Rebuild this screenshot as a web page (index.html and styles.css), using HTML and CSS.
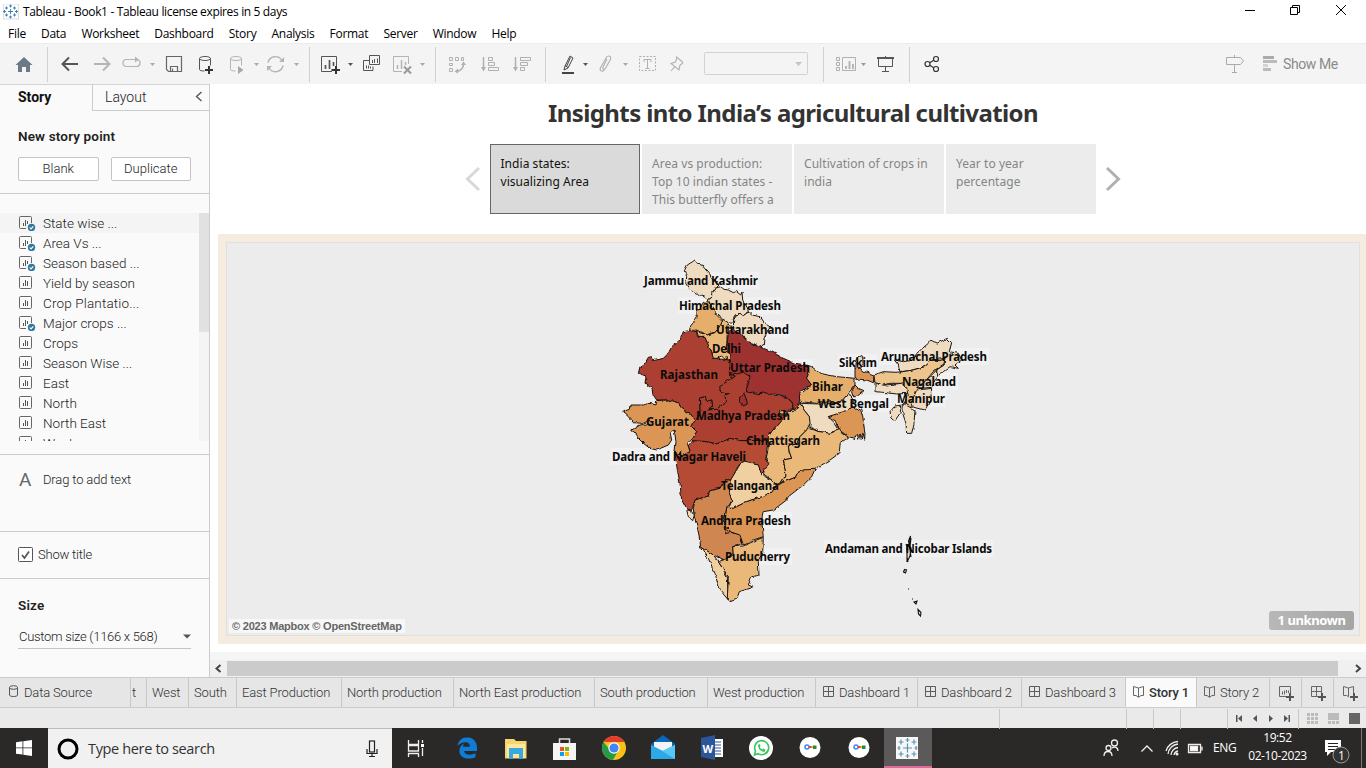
FILE: index.html
```html
<!DOCTYPE html>
<html lang="en">
<head>
<meta charset="utf-8">
<title>Tableau - Book1</title>
<link rel="stylesheet" href="styles.css">
</head>
<body>
<svg class="defs" width="0" height="0">
  <symbol id="sheet" viewBox="0 0 18 16">
    <rect x="1.500" y="1.500" width="12" height="12" rx="1" fill="none" stroke="#666"/>
    <path d="M5.500 8v3M7.500 5v6M9.500 6v5" stroke="#555" fill="none"/>
  </symbol>
  <symbol id="used" viewBox="0 0 18 16">
    <path d="M13.500 8V2.500a1 1 0 0 0-1-1h-10a1 1 0 0 0-1 1v10a1 1 0 0 0 1 1H8" fill="none" stroke="#666"/>
    <path d="M5.500 8v3M7.500 5v6M9.500 6v3" stroke="#555" fill="none"/>
    <circle cx="13.500" cy="12.500" r="3.700" fill="#34799b"/>
    <path d="M11.700 12.500l1.300 1.400 2.300-2.600" fill="none" stroke="#fff" stroke-width="1.100"/>
  </symbol>
  <symbol id="dash" viewBox="0 0 12 12"><path d="M.5.5h10v10H.5zM5.500.5v10M.5 5.500h10" fill="none" stroke="#5c5c5c"/></symbol>
  <symbol id="book" viewBox="0 0 12 12"><path d="M.5.5L5.500 2l5-1.500v9H8L5.500 11.300 3 9.500H.5zM5.500 2v9" fill="none" stroke="#666"/></symbol>
</svg>

<header class="titlebar">
  <svg class="app-logo" width="16" height="16" viewBox="0 0 16 16"><rect width="15" height="15" x=".5" fill="#fff" stroke="#ddd"/><path d="M7.500 5v5M5 7.500h5M3.500 2.500v3M2 4h3M11.500 2.500v3M10 4h3M3.500 9.500v3M2 11h3M11.500 9.500v3M10 11h3M7.500.5v3M6 2h3M7.500 11.500v3M6 13h3M1.500 6v3M0 7.500h3M13.500 6v3M12 7.500h3" stroke="#3b86b4"/></svg>
  <span class="title-text">Tableau - Book1 - Tableau license expires in 5 days</span>
  <svg class="win-controls" width="126" height="22" viewBox="1240 0 126 22" fill="none" stroke="#000"><path d="M1245 10.500h10M1290.500 7.500h7v7h-7zM1292.500 7.500v-2h7v7h-2M1336 5l10 10M1346 5l-10 10"/></svg>
</header>
<nav class="menu">
  <span>File</span><span>Data</span><span>Worksheet</span><span>Dashboard</span><span>Story</span><span>Analysis</span><span>Format</span><span>Server</span><span>Window</span><span>Help</span>
</nav>

<div class="toolbar">
  <svg width="47" height="41" viewBox="0 43 47 41"><path d="M15.500 65L24 57l8.500 8H30v7h-4v-5h-4v5h-4v-7z" fill="#6b7886"/></svg>
  <i class="sep"></i>
  <svg width="261" height="41" viewBox="48 43 261 41" fill="none" stroke="#b4b4b4">
    <path d="M78 64H63M69 57.500L62.500 64l6.500 6.500" stroke="#555" stroke-width="2"/>
    <path d="M94 64h15M103 57.500l6.500 6.500-6.500 6.500" stroke-width="2"/>
    <path d="M133 59.500h-6.500a3.500 3.500 0 0 0 0 7h10a3.500 3.500 0 0 0 2-6.400M130 59.500h6" stroke-width="1.200"/><path d="M135 56.500l4 3-4 3z" fill="#b4b4b4" stroke="none"/>
    <path d="M166.500 56.500h15v15h-13l-2-2zM170.500 71v-4.500h7V71M172.500 68.500v2.500" stroke="#666" stroke-width="1.200"/>
    <path d="M199.500 58.500v11c0 1 2 1.500 5 1.500M210.500 58.500v7" stroke="#555"/><ellipse cx="205" cy="58.500" rx="5.500" ry="2" stroke="#555"/><path d="M205 70h8M209 66v8" stroke="#333" stroke-width="2"/>
    <path d="M230.500 58.500v11c0 1 2 1.500 5 1.500M241.500 58.500v7"/><ellipse cx="236" cy="58.500" rx="5.500" ry="2"/><path d="M238 66l5.500 4-5.500 4z" fill="#a8a8a8" stroke="none"/>
    <path d="M268 62.500a7.600 7.600 0 0 1 14-2M283 65.500a7.600 7.600 0 0 1-14 2.500" stroke-width="1.400"/><path d="M279 62h5v-5zM272 66h-5v5z" fill="#b4b4b4" stroke="none"/>
    <path d="M150 63h5l-2.500 3zM254 63h5l-2.500 3zM294 63h5l-2.500 3z" fill="#aaa" stroke="none"/>
  </svg>
  <i class="sep"></i>
  <svg width="125" height="41" viewBox="310 43 125 41" fill="none" stroke="#555">
    <path d="M332 71.500h-10.500v-15h15V66"/><path d="M325.500 69v-4M329.500 69v-9M333.500 66v-4" stroke-width="1.700"/><path d="M331.500 70h8.500M336 66v8" stroke="#333" stroke-width="2"/>
    <path d="M348 63h5l-2.500 3z" fill="#555" stroke="none"/>
    <path d="M369.500 55.500h10v9h-10zM369 60.500h-5.500v10h9.500v-4M372.500 63v-3M374.500 63v-4M377.500 63v-4.500M366.500 68.500v-3M368.500 68.500v-3M370.500 68.500v-2"/>
    <g stroke="#b4b4b4"><path d="M402 71.500h-8.500v-15h15V64"/><path d="M397.500 69v-4M401.500 69v-9M405.500 65v-3" stroke-width="1.500"/><path d="M404 66.500l7 7M411 66.500l-7 7" stroke="#999" stroke-width="2"/><path d="M420 63h5l-2.500 3z" fill="#aaa" stroke="none"/></g>
  </svg>
  <i class="sep"></i>
  <svg width="109" height="41" viewBox="436 43 109 41" fill="none" stroke="#b0b0b0">
    <path d="M449.500 57.500h3v3h-3zM455.500 57.500h3v3h-3zM461.500 57.500h2v3h-2zM449.500 63.500h3v2h-3zM449.500 68.500h3v3h-3z"/><path d="M463.500 64c0 4-2 6.500-7 7.500" stroke-width="1.500"/><path d="M461 65h5l-2.500-3.500zM458 68.500v5l-3.500-2z" fill="#b0b0b0" stroke="none"/>
    <path d="M483.500 57v12M515.500 57v12" stroke-width="1.500"/><path d="M481 67h5l-2.500 4.500zM513 67h5l-2.500 4.500z" fill="#b0b0b0" stroke="none"/>
    <path d="M488.500 57.500h4v3h-4zM488.500 62.500h6v3h-6zM488.500 67.500h10v3h-10zM520.500 57.500h10v3h-10zM520.500 62.500h7v3h-7zM520.500 67.500h4v3h-4z"/>
  </svg>
  <i class="sep"></i>
  <svg width="277" height="41" viewBox="546 43 277 41" fill="none" stroke="#b0b0b0">
    <path d="M570 56l3 2-5 10-4 2 1-4zM565 65.500l3 2M570.500 57.500l-4 9" stroke="#444"/><path d="M562 73h12" stroke="#444" stroke-width="2"/><path d="M583 63h5l-2.500 3z" fill="#555" stroke="none"/>
    <path d="M607 59l-4 8c-1 2 1.500 3 2.500 1.200l5-9c1.300-2.500-2.500-4.500-4-2l-6 10.500c-1.500 3 2 4.500 3.500 2.500l4-6" stroke-width="1.100"/><path d="M623 63h5l-2.500 3z" fill="#aaa" stroke="none"/>
    <path d="M639.500 56.500h16v14h-16z" stroke-dasharray="2 1.500"/><path d="M644 62v-2.500h7V62M647.500 59.500V68M645.500 68.500h4"/>
    <path d="M676 56.500l7 6M677 57.500l-1.500 4.500-4.500 1.500 8 6.500 1-5 3-2M674.500 67l-3.500 4" stroke-width="1.100"/>
    <rect x="704.500" y="52.500" width="103" height="22" rx="1" fill="#f4f4f4" stroke="#d2d2d2"/><path d="M795 62h7l-3.500 4z" fill="#c4c4c4" stroke="none"/>
  </svg>
  <i class="sep"></i>
  <svg width="85" height="41" viewBox="824 43 85 41" fill="none" stroke="#b0b0b0">
    <path d="M836.500 57.500h3v3h-3zM836.500 62.500h3v3h-3zM836.500 67.500h3v3h-3zM842.500 57.500h13v13h-13z"/><path d="M846 69v-3M849.500 69v-8M853 69v-5" stroke-width="1.800"/><path d="M861 63h5l-2.500 3z" fill="#999" stroke="none"/>
    <path d="M878.500 58h14v8.500h-14zM885.500 56v2M885.500 67v4M882 71.500h7" stroke="#555"/><path d="M877 58h17" stroke="#555" stroke-width="2"/>
  </svg>
  <i class="sep"></i>
  <svg width="40" height="41" viewBox="910 43 40 41" fill="none" stroke="#333" stroke-width="1.200"><circle cx="927.500" cy="64" r="2.500"/><circle cx="936" cy="59" r="2.500"/><circle cx="936" cy="69" r="2.500"/><path d="M929.700 62.700l4-2.400M929.700 65.300l4 2.400"/></svg>
  <svg class="showme-icons" width="60" height="41" viewBox="1222 43 60 41" fill="none" stroke="#aaa"><path d="M1226.500 57.500h14l3 3.500-3 3.500h-14zM1234.500 55v2.500M1234.500 65v7M1232 72.500h5"/><path d="M1263 57.500h11" stroke-width="3"/><path d="M1263 61.500h14M1263 69.500h8" stroke="#bbb" stroke-width="3"/><path d="M1263 65.500h5" stroke="#d4d4d4" stroke-width="3"/></svg>
  <span class="showme">Show Me</span>
</div>

<div class="work">
  <aside class="side">
    <div class="tabs2"><b>Story</b><span>Layout<svg width="8" height="11" viewBox="0 0 8 11"><path d="M6.500 1L1.500 5.500l5 4.500" fill="none" stroke="#555" stroke-width="1.400"/></svg></span></div>
    <section class="newpoint">
      <h3>New story point</h3>
      <div class="btns"><button>Blank</button><button>Duplicate</button></div>
    </section>
    <section class="listbox">
      <ul>
        <li class="hover"><svg><use href="#used"/></svg>State wise ...</li>
        <li><svg><use href="#used"/></svg>Area Vs ...</li>
        <li><svg><use href="#used"/></svg>Season based ...</li>
        <li><svg><use href="#sheet"/></svg>Yield by season</li>
        <li><svg><use href="#sheet"/></svg><span class="wide">Crop Plantatio...</span></li>
        <li><svg><use href="#used"/></svg>Major crops ...</li>
        <li><svg><use href="#sheet"/></svg>Crops</li>
        <li><svg><use href="#sheet"/></svg>Season Wise ...</li>
        <li><svg><use href="#sheet"/></svg>East</li>
        <li><svg><use href="#sheet"/></svg>North</li>
        <li><svg><use href="#sheet"/></svg>North East</li>
        <li><svg><use href="#sheet"/></svg>West</li>
      </ul>
      <div class="track"><div class="thumb"></div></div>
    </section>
    <section class="dragtext"><span class="bigA">A</span>Drag to add text</section>
    <section class="showtitle"><svg width="15" height="15" viewBox="0 0 15 15"><rect x=".5" y=".5" width="14" height="14" rx="1" fill="#fff" stroke="#555"/><path d="M4 8l2.500 3L11 4.500" fill="none" stroke="#555" stroke-width="1.700"/></svg>Show title</section>
    <section class="size"><h3>Size</h3><div class="select">Custom size (1166 x 568)<svg width="8" height="5" viewBox="0 0 8 5"><path d="M0 .5h8L4 4.500z" fill="#555"/></svg></div></section>
  </aside>

  <main class="stage">
    <h1>Insights into India’s agricultural cultivation</h1>
    <div class="points">
      <svg width="16" height="26" viewBox="0 0 16 26"><path d="M14 2L2.500 13 14 24" fill="none" stroke="#d8d8d8" stroke-width="3"/></svg>
      <div class="point on">India states:<br>visualizing Area</div>
      <div class="point">Area vs production:<br>Top 10 indian states -<br>This butterfly offers a</div>
      <div class="point">Cultivation of crops in<br>india</div>
      <div class="point">Year to year<br>percentage</div>
      <svg width="16" height="26" viewBox="0 0 16 26"><path d="M2 2l11.500 11L2 24" fill="none" stroke="#b0b0b0" stroke-width="3"/></svg>
    </div>
    <div class="frame">
      <svg class="map" width="1134" height="394" viewBox="226 242 1134 394">
        <defs><filter id="coast" x="-5%" y="-5%" width="110%" height="110%" color-interpolation-filters="sRGB"><feTurbulence type="fractalNoise" baseFrequency=".18" numOctaves="2" seed="4"/><feDisplacementMap in="SourceGraphic" scale="3.500" xChannelSelector="R" yChannelSelector="G"/></filter></defs>
        <g fill="#f1f1f1">
          <rect x="643" y="272" width="116" height="17"/><rect x="678" y="297" width="104" height="17"/><rect x="715" y="321" width="75" height="17"/><rect x="729" y="359" width="84" height="17"/><rect x="838" y="354" width="40" height="17"/><rect x="880" y="348" width="109" height="17"/><rect x="901" y="373" width="57" height="17"/><rect x="896" y="390" width="50" height="17"/><rect x="818" y="395" width="73" height="17"/><rect x="611" y="448" width="136" height="17"/><rect x="700" y="512" width="92" height="17"/><rect x="724" y="548" width="68" height="17"/><rect x="824" y="540" width="170" height="17"/>
        </g>
        <g filter="url(#coast)"><g class="states" transform="translate(600 250) scale(.33333)">
          <path fill="#ab4032" d="M268 242L250 245 240 270 215 290 205 310 190 325 160 332 155 320 145 322 135 340 120 350 115 370 138 378 135 400 155 415 160 435 170 450 205 450 240 460 245 475 270 490 285 510 300 495 300 470 298 445 315 440 320 455 335 450 338 470 325 480 350 478 378 455 375 435 388 430 405 375 390 360 390 330 340 325 335 305 315 262 292 262 290 245z"/>
          <path fill="#9e3231" d="M385 245L400 235 420 250 445 275 478 290 515 305 550 325 585 340 620 345 628 365 620 385 635 405 600 425 600 450 595 470 580 480 575 455 560 440 525 432 495 436 470 430 438 425 405 400 388 368 390 340 380 300z"/>
          <path fill="#ab4032" d="M388 368L410 372 430 367 450 380 445 400 438 425 470 433 495 428 525 436 560 442 578 460 578 480 545 482 560 495 540 515 515 545 508 570 460 572 420 572 390 565 350 582 320 575 285 575 275 570 290 545 275 530 285 510 300 500 300 470 298 445 315 440 320 455 335 450 338 470 325 480 350 478 378 455 375 435 388 430 360 423 360 408 405 380z"/>
          <path fill="#9e3231" d="M432 430L440 450 442 462 430 468 418 455 420 440z"/>
          <path fill="#b54b35" d="M225 610L232 660 240 700 245 750 260 778 275 780 285 750 325 738 330 722 360 715 375 690 395 690 410 655 425 635 450 640 475 645 480 675 495 660 510 645 498 630 500 600 505 570 460 572 420 572 390 565 350 582 320 575 285 572 275 575 262 590 270 605 250 615z"/>
          <path fill="#db9655" d="M168 465L150 460 130 465 90 465 88 478 68 485 85 500 100 518 130 520 150 510 140 522 120 525 95 540 115 565 130 580 150 595 170 600 205 585 215 570 210 545 222 540 228 575 225 600 232 620 250 615 270 605 262 580 275 565 290 545 275 530 285 510 270 490 245 475 240 460 205 450 170 452z"/>
          <path fill="#efdbc0" d="M253 62L262 45 278 35 285 30 292 40 305 42 312 53 325 68 335 85 350 95 357 105 345 118 335 128 338 140 325 150 312 140 298 138 290 130 270 118 262 108 257 100 260 80z"/>
          <path fill="#efdbc0" d="M338 128L345 115 362 110 372 118 385 120 400 128 410 125 422 135 426 126 428 150 438 165 445 185 430 195 420 190 405 195 400 205 402 220 385 218 370 210 358 198 345 188 330 160 325 150 338 140z"/>
          <path fill="#e5ae6a" d="M325 155L338 175 345 190 355 200 368 213 362 225 345 248 330 250 322 255 305 248 290 240 268 242 272 228 285 210 292 200 290 180 300 178 310 160z"/>
          <path fill="#eab878" d="M290 245L305 250 322 255 345 248 362 225 370 208 380 215 388 232 382 250 380 280 378 300 392 310 388 330 375 328 365 318 350 325 340 325 335 305 325 285 315 262 295 262z"/>
          <path fill="#efdbc0" d="M402 205L408 195 420 190 430 197 445 186 455 195 480 200 490 215 515 232 500 248 492 265 490 285 478 290 460 280 445 275 430 262 420 250 402 245 400 220z"/>
          <path fill="#e5ae6a" d="M620 345L635 350 660 370 710 380 765 385 765 405 745 430 720 460 690 455 650 460 600 455 598 435 635 405 620 385 628 365z"/>
          <path fill="#efdbc0" d="M600 460L660 462 720 460 745 430 760 450 752 470 730 490 685 500 705 520 718 540 690 550 660 545 630 532 628 500 612 480z"/>
          <path fill="#eab878" d="M600 460L612 480 628 500 630 520 620 540 600 560 590 582 565 588 568 605 575 625 550 630 555 655 558 675 545 695 530 705 515 690 490 672 495 655 510 645 498 630 505 590 505 560 515 545 540 515 560 495 537 495 540 482 580 485z"/>
          <path fill="#eab878" d="M628 535L660 545 690 550 715 540 745 562 720 580 718 610 690 630 665 645 645 658 620 665 600 660 590 680 555 695 540 705 558 675 555 655 550 630 575 625 568 605 565 588 590 582 600 560 620 540z"/>
          <path fill="#db9655" d="M685 500L730 485 755 470 782 480 788 500 795 550 794 568 789 550 784 568 780 552 776 568 772 553 765 565 745 560 718 540 710 515z"/>
          <path fill="#db9655" d="M765 405L775 415 792 422 770 440 758 440 755 425z"/>
          <path fill="#db9655" d="M765 355L780 355 795 365 822 375 820 398 800 390 780 388 765 382z"/>
          <path fill="#efdbc0" d="M765 340L770 325 780 318 788 322 790 350 765 355z"/>
          <path fill="#efdbc0" d="M900 365L895 345 883 330 910 335 940 330 950 310 985 280 992 270 1010 280 1042 265 1055 278 1048 305 1075 310 1085 330 1065 345 1075 355 1050 350 1030 365 1010 380 1010 360 1032 345 1035 325 995 330 975 350 930 362z"/>
          <path fill="#edc48b" d="M822 375L850 365 890 367 930 362 975 350 995 330 1020 332 1035 325 1032 345 1000 365 975 395 945 425 940 460 930 475 910 465 925 435 915 412 905 400 870 400 850 405 825 398z"/>
          <path fill="#efdbc0" d="M1010 360L1010 380 995 412 965 415 950 412 975 395z"/>
          <path fill="#efdbc0" d="M950 420L995 415 992 450 975 480 945 472 932 462z"/>
          <path fill="#efdbc0" d="M825 400L850 406 905 400 920 412 923 430 890 432 860 428 825 425z"/>
          <path fill="#efdbc0" d="M870 485L885 468 905 465 900 490 885 512 872 500z"/>
          <path fill="#efdbc0" d="M910 460L935 475 945 480 942 520 935 550 920 550 918 520 908 490z"/>
          <path fill="#cf8650" d="M285 750L325 738 330 722 360 715 375 690 392 690 388 725 395 750 380 775 372 815 375 840 415 855 432 880 398 890 400 910 370 930 340 915 302 890 295 845 283 800 280 775z"/>
          <path fill="#f0cfa0" d="M410 660L425 635 450 640 475 645 485 675 515 690 530 705 510 730 490 738 470 745 440 755 400 775 385 775 395 750 388 725 392 690z"/>
          <path fill="#db9655" d="M380 775L400 775 440 755 490 738 510 730 530 705 555 695 590 680 600 660 645 658 635 680 610 705 565 740 560 750 520 780 490 785 485 810 490 860 460 870 430 885 420 855 390 845 375 835 370 815 378 790z"/>
          <path fill="#efdbc0" d="M260 780L275 782 283 795 278 812 265 800z"/>
          <path fill="#f0cfa0" d="M302 890L340 915 355 935 370 960 382 980 385 1050 360 1020 345 970 325 925z"/>
          <path fill="#eab878" d="M398 890L430 888 470 870 490 862 488 910 475 935 477 975 455 980 445 1005 460 1012 418 1025 410 1048 390 1055 382 1045 385 980 355 935 370 930 400 915z"/>
          <path fill="#cf8650" d="M372 835L388 832 390 848 378 850zM377 838l8 6M230 618l14-12M355 318l4 12M378 320l2 10M388 325l4 15"/>
        </g></g>
        <g class="isles"><path d="M910.500 536l-2 5 1 4zM911 538l-1 9M907 551c-1-3 1-6 2-7l2 4-1 8-3 6zM909 543l2 14M906 544l2 6M907 557l1 5M904.500 569.500l2 .5-1 3-2-1zM908 589h1M912 599h1M914 602l3-1-1 3zM918 609.500l3 3-.5 3.500-2-2z"/></g>
        <g class="labels">
          <text x="644" y="285" textLength="114">Jammu and Kashmir</text><text x="679" y="310" textLength="102">Himachal Pradesh</text><text x="716" y="334" textLength="73">Uttarakhand</text><text x="712" y="353" textLength="29">Delhi</text><text x="730" y="372" textLength="80">Uttar Pradesh</text><text x="660" y="379" textLength="58">Rajasthan</text><text x="839" y="367" textLength="38">Sikkim</text><text x="881" y="361" textLength="106">Arunachal Pradesh</text><text x="902" y="386" textLength="54">Nagaland</text><text x="897" y="403" textLength="48">Manipur</text><text x="812" y="391" textLength="31">Bihar</text><text x="818" y="408" textLength="71">West Bengal</text><text x="646" y="426" textLength="43">Gujarat</text><text x="696" y="420" textLength="94">Madhya Pradesh</text><text x="746" y="445" textLength="74">Chhattisgarh</text><text x="612" y="461" textLength="134">Dadra and Nagar Haveli</text><text x="721" y="490" textLength="58">Telangana</text><text x="701" y="525" textLength="90">Andhra Pradesh</text><text x="725" y="561" textLength="65">Puducherry</text><text x="825" y="553" textLength="167">Andaman and Nicobar Islands</text>
        </g>
      </svg>
      <span class="credit">© 2023 Mapbox © OpenStreetMap</span>
      <span class="unknown">1 unknown</span>
    </div>
    <div class="under"></div>
    <div class="hscroll">
      <svg width="17" height="17" viewBox="0 0 17 17"><path d="M10.500 5l-4 3.500 4 3.500" fill="none" stroke="#444" stroke-width="2"/></svg>
      <div class="hthumb"></div>
      <svg width="28" height="17" viewBox="0 0 28 17"><path d="M18 5l4 3.500-4 3.500" fill="none" stroke="#444" stroke-width="2"/></svg>
    </div>
  </main>
</div>

<div class="sheets">
  <div class="source"><svg width="10" height="13" viewBox="0 0 10 13" fill="none" stroke="#555"><ellipse cx="4.500" cy="2.500" rx="4" ry="1.800"/><path d="M.5 2.500v7.500c0 2 8 2 8 0V2.500"/></svg>Data Source</div>
  <div class="cut">t</div><div>West</div><div>South</div><div>East Production</div><div>North production</div><div>North East production</div><div>South production</div><div>West production</div>
  <div class="ico"><svg><use href="#dash"/></svg>Dashboard 1</div><div class="ico"><svg><use href="#dash"/></svg>Dashboard 2</div><div class="ico"><svg><use href="#dash"/></svg>Dashboard 3</div>
  <div class="ico active"><svg><use href="#book"/></svg>Story 1</div><div class="ico"><svg><use href="#book"/></svg>Story 2</div>
  <div class="add"><svg viewBox="0 0 16 16" fill="none" stroke="#666"><path d="M8 11.500H1.500v-10h11V8M4.500 9.500v-3M6.500 9.500v-4M8.500 8v-3M10.500 8V5.500"/><path d="M8 12h8M12 8v8" stroke="#555" stroke-width="2"/></svg></div>
  <div class="add"><svg viewBox="0 0 16 16" fill="none" stroke="#666"><path d="M8 11.500H1.500v-10h10V8M6.500 1.500v10M1.500 6.500h10"/><path d="M8 12h8M12 8v8" stroke="#555" stroke-width="2"/></svg></div>
  <div class="add"><svg viewBox="0 0 16 16" fill="none" stroke="#666"><path d="M7 12L4.500 10.500h-3v-9l5 1.500 5-1.500V8M6.500 3v8"/><path d="M8 12h8M12 8v8" stroke="#555" stroke-width="2"/></svg></div>
</div>
<div class="status">
  <svg width="367" height="21" viewBox="999 707 367 21"><path d="M999.500 708v20M1126.500 708v20M1153.500 708v20M1180.500 708v20M1227.500 708v20M1298.500 708v20" stroke="#c8c8c8"/><path d="M1236 714h1.500v7H1236zM1242 714v7l-4-3.500zM1257 714v7l-4-3.500zM1269 714v7l4-3.500zM1284 714v7l4-3.500zM1288.500 714h1.500v7h-1.500z" fill="#555"/><path d="M1307 712h3v3h-3zm4 0h3v3h-3zm4 0h3v3h-3zm-8 4h3v3h-3zm4 0h3v3h-3zm4 0h3v3h-3zm-8 4h3v3h-3zm4 0h3v3h-3zm4 0h3v3h-3zM1328 712h11v7h-11zM1328 720h3v3h-3zm4 0h3v3h-3zm4 0h3v3h-3z" fill="#bbb"/><path d="M1349 712h11v11h-11z" fill="#666"/></svg>
</div>

<footer class="taskbar">
  <div class="start"><svg width="16" height="16" viewBox="0 0 16 16" fill="#fff"><path d="M0 2.200L6.500 1.300v6.200H0zM7.300 1.200L16 0v7.500H7.300zM0 8.300h6.500v6.300L0 13.700zM7.300 8.300H16V16l-8.700-1.200z"/></svg></div>
  <div class="search"><svg width="22" height="22" viewBox="0 0 22 22"><circle cx="11" cy="11" r="9" fill="none" stroke="#000" stroke-width="3"/></svg><span>Type here to search</span><svg width="12" height="18" viewBox="0 0 12 18" fill="none" stroke="#222" stroke-width="1.200"><rect x="3.500" y="1" width="5" height="11"/><path d="M1 9v4.500h10V9M6 14v3M3 16.500h6"/></svg></div>
  <svg class="apps" width="548" height="40" viewBox="392 728 548 40">
    <path d="M408.500 740v4.500h10V740M408.500 745.500v5.500h10v-5.500zM408.500 757v-3.500h10v3.500M422.500 740v3M422.500 748v8" fill="none" stroke="#eee" stroke-width="1.300"/><path d="M421 744h3v3h-3z" fill="#fff"/>
    <path d="M457.500 746c1-6 5-9 10.500-8.500 6 .5 9 5 9 11v2.500h-13c.3 4 6.500 4.800 11.500 2.300v4c-9 3.500-17.500-.3-16-8 .5-3 3-5 5-6-1 1-1.500 2.200-1.500 3.500h7c0-7-9.500-5-12.500-.8z" fill="#0e7dd8"/>
    <path d="M505 739h9l2 2h10.500v17.500H505z" fill="#f6d56f"/><path d="M507 744h18v14h-18z" fill="#ffe69a"/><path d="M509 748h14v11h-4v-5h-6v5h-4z" fill="#36a9df"/>
    <path d="M559.500 744v-5h10v5" fill="none" stroke="#ddd" stroke-width="1.500"/><path d="M553 743h23v17h-23z" fill="#f4f4f4"/><path d="M560 747h4v4h-4z" fill="#f25022"/><path d="M565 747h4v4h-4z" fill="#7fba00"/><path d="M560 752h4v4h-4z" fill="#00a4ef"/><path d="M565 752h4v4h-4z" fill="#ffb900"/>
    <circle cx="614" cy="748" r="12" fill="#fbc116"/><path d="M603.600 742a12 12 0 0 0 9.400 18l5-9-8-1z" fill="#259b48"/><path d="M603.600 742a12 12 0 0 1 20.800 0H614z" fill="#e33b2e"/><circle cx="614" cy="748" r="5.700" fill="#fff"/><circle cx="614" cy="748" r="4.600" fill="#4285f4"/>
    <path d="M651 744l12-9 12 9v15h-24z" fill="#0b67b8"/><path d="M654 742h18v9h-18z" fill="#f4f4f4"/><path d="M651 745l12 6 12-6v14h-24z" fill="#2ea9e8"/><path d="M675 745v14l-13-8z" fill="#55c8f5"/>
    <path d="M712 739h11v18h-11z" fill="#fff"/><path d="M713 742h8M713 745h8M713 748h8M713 751h8M713 754h8" stroke="#2b579a"/><path d="M701 738l14-3v25l-14-3z" fill="#2b579a"/><text x="702.500" y="752.500" class="w">W</text>
    <circle cx="761" cy="748" r="12" fill="#fff"/><path d="M754.500 755l1-4a7 7 0 1 1 2.600 2.700z" fill="none" stroke="#35c85a" stroke-width="1.600"/><path d="M758 745c0 4 3 6.500 6.500 7l1-2.300-2.200-1.200-1 1c-1.200-.5-2-1.400-2.500-2.500l.8-1-1-2z" fill="#35c85a"/>
    <g id="gl"><circle cx="810" cy="747.500" r="10.500" fill="#fff"/><circle cx="807" cy="747" r="2" fill="none" stroke="#4285f4" stroke-width="1.500"/><path d="M809 747h3" stroke="#ea4335" stroke-width="2"/><path d="M811.500 747h2" stroke="#fbbc05" stroke-width="2"/><path d="M813 745.500h3.500v3.500H813z" fill="#1e8e3e"/></g>
    <use href="#gl" x="49"/>
    <path d="M884 728h48v40h-48z" fill="#5b5959"/><path d="M884 766h48v2h-48z" fill="#e0689a"/><path d="M896 737h22v22h-22z" fill="#f7f7f7"/>
    <path transform="translate(-.500 0)" d="M908 743.500v9M903.500 748h9M901.500 739.500v5M899 742h5M914.500 739.500v5M912 742h5M901.500 751.500v5M899 754h5M914.500 751.500v5M912 754h5M908 738v4M906 740h4M908 754v4M906 756h4M899.500 746v4M898 748h3M916.500 746v4M915 748h3" stroke="#5f93b4" stroke-width="1.200"/>
  </svg>
  <svg class="tray" width="110" height="40" viewBox="1100 728 110 40" fill="none" stroke="#eee" stroke-width="1.300"><circle cx="1108.500" cy="748" r="2.500"/><circle cx="1114.500" cy="743" r="3"/><path d="M1104 756c0-6 8-6 8 0M1112 748c3-2 6-.5 6 3"/><path d="M1141.500 751.500l5.500-5.500 5.500 5.500"/><path d="M1168 754a11 11 0 0 1 10-10M1171 755a8 8 0 0 1 7-7.500M1174 755a5 5 0 0 1 4-4M1166 751a14 14 0 0 1 12-9.500"/><circle cx="1177" cy="754" r="1.500" fill="#eee" stroke="none"/><path d="M1188.500 744.500h12v8h-12zM1202 746.500v4"/><path d="M1190.500 746.500h7v4h-7z" fill="#fff"/></svg>
  <span class="lang">ENG</span>
  <span class="clock">19:52<br>02-10-2023</span>
  <svg class="notice" width="46" height="40" viewBox="1320 728 46 40"><path d="M1325 740h16v12h-10l-4 4v-4h-2z" fill="#fff"/><path d="M1328 743.500h10M1328 746.500h10M1328 749.500h7" stroke="#222"/><circle cx="1341" cy="755" r="8" fill="#333" stroke="#999"/><text x="1338" y="759.500" class="n">1</text><path d="M1361.500 728v40" stroke="#777"/></svg>
</footer>
</body>
</html>
```
FILE: styles.css
```css
* { box-sizing: border-box; }
body { margin: 0; width: 1366px; height: 768px; overflow: hidden; background: #fff; font-family: "Open Sans", "Noto Sans", sans-serif; color: #000; }
svg { display: block; flex: none; }
.defs { position: absolute; }
h1, h3, ul { margin: 0; padding: 0; }

.titlebar { display: flex; height: 23px; padding-left: 3px; }
.app-logo { margin-top: 4px; }
.title-text { margin: 3px 0 0 4px; font-size: 12px; line-height: 17px; letter-spacing: -.35px; }
.win-controls { margin-left: auto; }
.menu { display: flex; height: 20px; padding-left: 8px; gap: 15.200px; font-size: 12px; line-height: 21px; letter-spacing: -.29px; }

.toolbar { display: flex; align-items: center; height: 41px; background: #f4f4f4; border-top: 1px solid #ededed; }
.toolbar > svg { margin-top: -1px; }
.sep { flex: none; width: 1px; height: 35px; background: #d0d0d0; }
.showme-icons { margin-left: auto; }
.showme { width: 84px; padding-left: 1px; font: 14px Roboto, sans-serif; letter-spacing: -.4px; color: #8a8a8a; }

.work { display: flex; height: 593px; }
.side { width: 210px; background: #fafafa; border-right: 1px solid #ccc; font: 300 13px Roboto, sans-serif; color: #222; }
.tabs2 { display: flex; height: 27px; border-top: 1px solid #d4d4d4; font-size: 14px; line-height: 25px; }
.tabs2 b { width: 92px; padding-left: 18px; font-weight: 700; color: #111; }
.tabs2 span { display: flex; justify-content: space-between; flex: 1; padding: 0 6px 0 12px; border-left: 1px solid #ccc; border-bottom: 1px solid #ccc; }
.tabs2 svg { margin-top: 6px; }
.side h3 { font-size: 13.500px; line-height: 18px; font-weight: 600; letter-spacing: .15px; color: #222; }
.newpoint { height: 83px; padding: 16px 18px 0; border-bottom: 1px solid #ccc; }
.btns { display: flex; gap: 12px; margin-top: 12px; }
.btns button { width: 81px; height: 24px; padding: 0 0 2px; background: #fff; border: 1px solid #c4c4c4; border-radius: 2px; font: 300 13px Roboto, sans-serif; color: #222; }
.listbox { display: flex; height: 261px; padding: 19px 0 13px; border-bottom: 1px solid #ccc; }
.listbox ul { flex: 1; overflow: hidden; list-style: none; }
.listbox li { display: flex; height: 20px; padding-left: 18px; line-height: 20px; font-size: 13.500px; }
.listbox li.hover { background: #f4f4f4; }
.listbox li svg { width: 18px; height: 16px; margin: 2px 7px 0 0; }
.wide { letter-spacing: .15px; }
.track { width: 10px; background: #f4f4f4; }
.thumb { height: 119px; background: #e1e1e1; }
.dragtext { display: flex; align-items: center; height: 77px; padding: 0 0 27px 19px; border-bottom: 1px solid #ccc; font-size: 13px; letter-spacing: -.15px; }
.bigA { width: 24px; font-size: 19px; font-weight: 400; color: #666; }
.showtitle { display: flex; align-items: center; gap: 5px; height: 47px; padding: 0 0 1px 18px; border-bottom: 1px solid #ccc; letter-spacing: -.2px; }
.size { padding: 17px 18px 0; }
.select { display: flex; align-items: center; justify-content: space-between; height: 25px; margin-top: 10px; padding-left: 1px; border-bottom: 1px solid #c4c4c4; letter-spacing: -.29px; }

.stage { flex: 1; min-width: 0; }
.stage h1 { height: 60px; padding: 11px 0 0 10px; text-align: center; font: 700 24px/36px "Noto Sans", sans-serif; color: #333; letter-spacing: -.61px; }
.points { display: flex; align-items: center; justify-content: center; gap: 2px; height: 70px; padding-left: 10px; }
.points > svg:first-child { margin-right: 7px; }
.points > svg:last-child { margin-left: 7px; }
.point { width: 150px; height: 70px; padding: 11px 0 0 10px; overflow: hidden; background: #ececec; color: #858585; font: 12px/18px "Noto Sans", sans-serif; letter-spacing: .05px; white-space: nowrap; }
.point.on { padding: 10px 0 0 9.500px; background: #dadada; border: 1px solid #666; color: #111; }
.frame { position: relative; height: 410px; margin: 20px 0 0 8px; padding: 8px 6px 8px 8px; background: #f5ece0; }
.map { background: #ececec; outline: 1px solid #e0e0e0; outline-offset: -1px; }
.states path { stroke: #15100c; stroke-width: 2.900; stroke-linejoin: round; }
.isles path { fill: #efdbc0; stroke: #111; stroke-width: 1.100; }
.labels { font: 700 11.500px "Noto Sans", sans-serif; fill: #0b0b0b; }
.credit { position: absolute; left: 11px; bottom: 11px; height: 14px; padding: 0 3px; background: #f7f7f7; font: 700 11px/14px "Liberation Sans", sans-serif; letter-spacing: -.21px; color: #666; }
.unknown { position: absolute; right: 12px; top: 377px; width: 85px; height: 19px; border-radius: 3px; background: linear-gradient(90deg, #b8b8b8, #a5a5a5); color: #fff; text-align: center; font: 700 13px/18px "Noto Sans", sans-serif; letter-spacing: -.4px; }
.under { height: 8px; margin-top: 8px; background: #f5f5f5; }
.hscroll { display: flex; height: 17px; background: #f0f0f0; }
.hthumb { flex: 1; margin: 1px 0; background: #cbcbcb; }

.sheets { display: grid; grid-template-columns: 130px 16px 42px 48px 105px 112px 141px 113px 108px 102px 104px 104px 71px 73px 32px 32px 33px; height: 31px; border-top: 1px solid #ccc; border-bottom: 1px solid #ccc; background: #e6e6e6; font: 300 13px/30px Roboto, sans-serif; letter-spacing: -.15px; color: #333; }
.sheets > div { padding-left: 5px; border-left: 1px solid #c8c8c8; white-space: nowrap; overflow: hidden; }
.sheets > .source { display: flex; align-items: center; gap: 5px; padding-left: 9px; border-left: 0; }
.sheets .source svg { margin-top: -3px; }
.sheets > .cut { padding-left: 1px; }
.sheets > .ico { display: flex; align-items: center; gap: 4px; padding-left: 7px; }
.ico svg { width: 12px; height: 12px; margin-top: -2px; }
.sheets > .active { background: #fafafa; color: #333; font-weight: 500; line-height: 28px; }
.sheets > .add { padding: 7px 0 0 8px; }
.add svg { width: 16px; height: 16px; }
.status { display: flex; justify-content: flex-end; height: 20px; background: #eaeaea; }

.taskbar { display: flex; height: 40px; background: #2b2928; color: #fff; }
.start { width: 48px; padding: 12px 0 0 16px; }
.search { display: flex; align-items: center; width: 344px; padding: 0 14px 0 9px; background: #f1f1f1; border-top: 1px solid #bbb; color: #333; font-size: 14.500px; letter-spacing: -.35px; }
.search span { flex: 1; margin-left: 9px; }
.tray { margin-left: auto; }
.lang { width: 28px; padding-left: 3px; font-size: 12px; line-height: 40px; letter-spacing: -.4px; }
.clock { width: 82px; padding: 1px 3px 0 0; text-align: center; font-size: 12px; line-height: 18px; letter-spacing: -.4px; }
.w { font: 700 11px "Open Sans", sans-serif; fill: #fff; }
.n { font: 12px "Open Sans", sans-serif; fill: #fff; }
```
